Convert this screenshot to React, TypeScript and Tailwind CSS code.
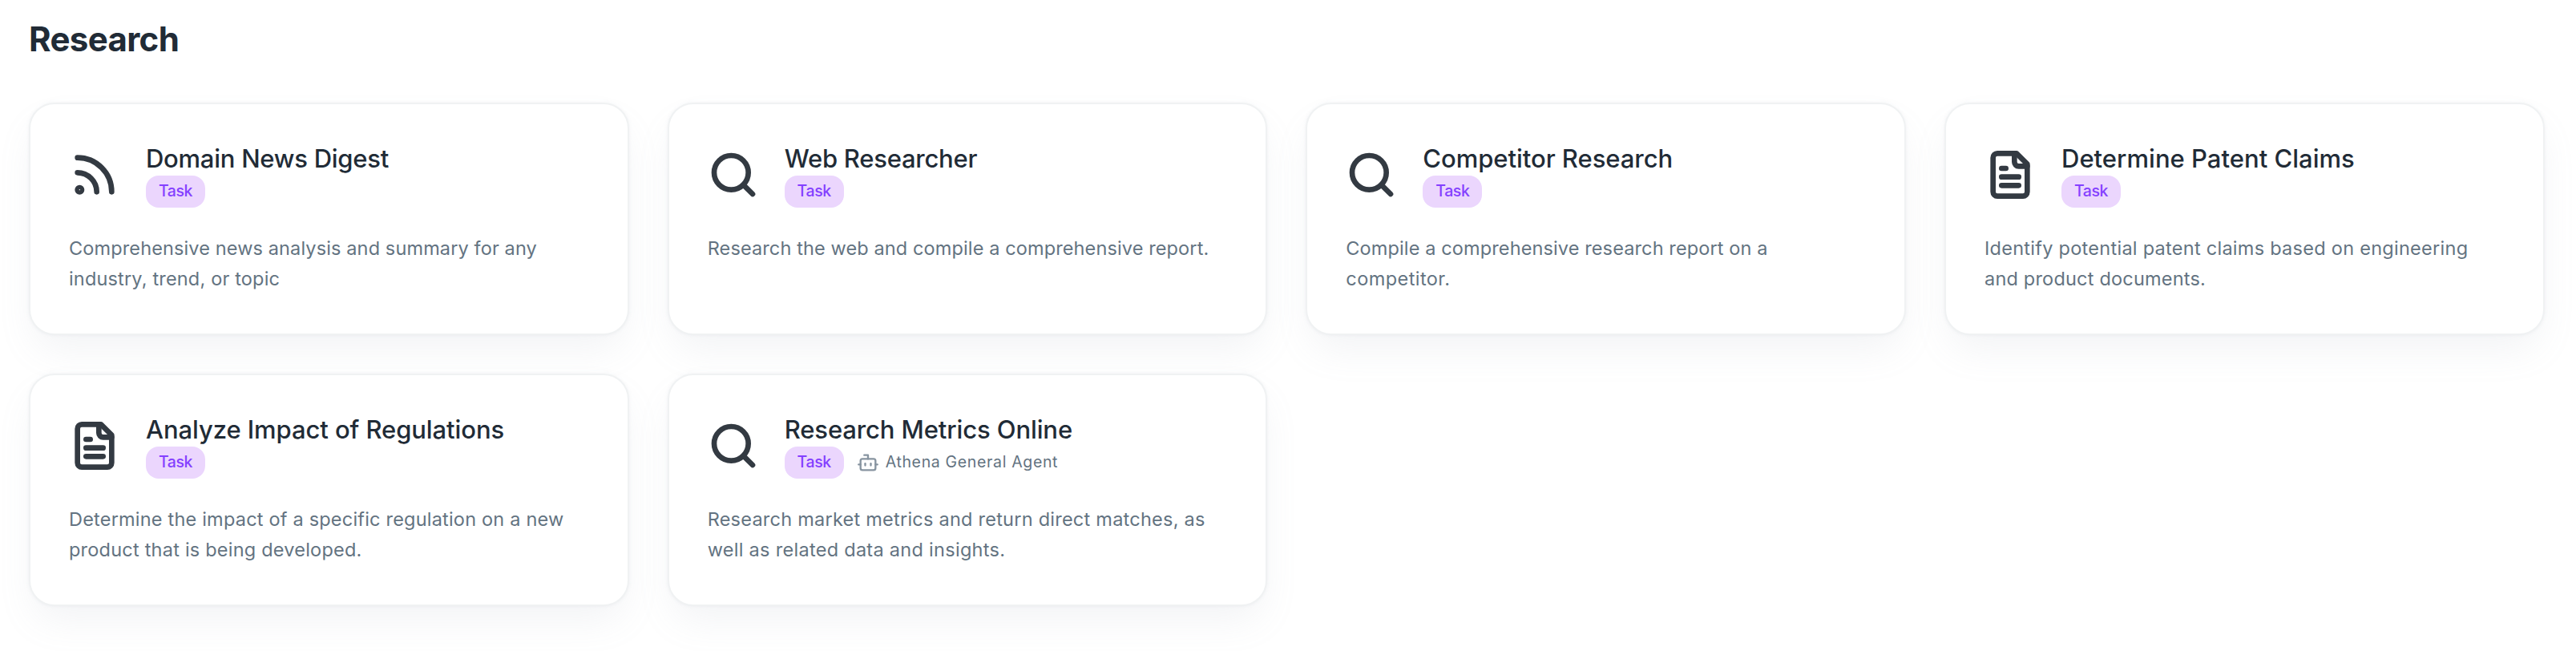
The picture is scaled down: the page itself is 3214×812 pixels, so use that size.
import type { ReactNode } from "react";

type Kind = "rss" | "search" | "file";

interface Line {
  text: string;
  tracking: string;
}

interface CardData {
  icon: Kind;
  title: Line;
  lines: Line[];
  agent?: string;
}

const cards: CardData[] = [
  {
    icon: "rss",
    title: { text: "Domain News Digest", tracking: "tracking-[-0.26px]" },
    lines: [
      { text: "Comprehensive news analysis and summary for any", tracking: "tracking-[0.124px]" },
      { text: "industry, trend, or topic", tracking: "tracking-[0.171px]" },
    ],
  },
  {
    icon: "search",
    title: { text: "Web Researcher", tracking: "tracking-[-0.25px]" },
    lines: [{ text: "Research the web and compile a comprehensive report.", tracking: "tracking-[0.12px]" }],
  },
  {
    icon: "search",
    title: { text: "Competitor Research", tracking: "tracking-[-0.04px]" },
    lines: [
      { text: "Compile a comprehensive research report on a", tracking: "tracking-[0.12px]" },
      { text: "competitor.", tracking: "tracking-[0.43px]" },
    ],
  },
  {
    icon: "file",
    title: { text: "Determine Patent Claims", tracking: "tracking-[0.02px]" },
    lines: [
      { text: "Identify potential patent claims based on engineering", tracking: "tracking-[0.27px]" },
      { text: "and product documents.", tracking: "tracking-[0.2px]" },
    ],
  },
  {
    icon: "file",
    title: { text: "Analyze Impact of Regulations", tracking: "tracking-[-0.08px]" },
    lines: [
      { text: "Determine the impact of a specific regulation on a new", tracking: "tracking-[0.202px]" },
      { text: "product that is being developed.", tracking: "tracking-[0.22px]" },
    ],
  },
  {
    icon: "search",
    title: { text: "Research Metrics Online", tracking: "tracking-[-0.11px]" },
    lines: [
      { text: "Research market metrics and return direct matches, as", tracking: "tracking-[0.24px]" },
      { text: "well as related data and insights.", tracking: "tracking-[0.29px]" },
    ],
    agent: "Athena General Agent",
  },
];

const shapes: Record<Kind, ReactNode> = {
  rss: (
    <>
      <path d="M4 11a9 9 0 0 1 9 9" />
      <path d="M4 4a16 16 0 0 1 16 16" />
      <circle cx="5" cy="19" r="1" />
    </>
  ),
  search: (
    <>
      <circle cx="11" cy="11" r="8" />
      <path d="m21 21-4.3-4.3" />
    </>
  ),
  file: (
    <>
      <path d="M15 2H6a2 2 0 0 0-2 2v16a2 2 0 0 0 2 2h12a2 2 0 0 0 2-2V7Z" />
      <path d="M14 2v4a2 2 0 0 0 2 2h4" />
      <path d="M10 9H8" />
      <path d="M16 13H8" />
      <path d="M16 17H8" />
    </>
  ),
};

function BotIcon() {
  return (
    <svg viewBox="0 0 24 24" className="h-7 w-7 shrink-0 fill-none stroke-[#8794a0] stroke-2" strokeLinecap="round" strokeLinejoin="round">
      <path d="M12 8V4H8" />
      <rect width="16" height="12" x="4" y="8" rx="2" />
      <path d="M2 14h2" />
      <path d="M20 14h2" />
      <path d="M15 13v2" />
      <path d="M9 13v2" />
    </svg>
  );
}

function Card({ card }: { card: CardData }) {
  return (
    <article className="h-[290px] rounded-[32px] border-2 border-[#f0f2f3] bg-white px-12 pt-12 shadow-[0_0_4px_rgba(145,158,171,0.12),0_24px_48px_-8px_rgba(145,158,171,0.12)]">
      <div className="flex h-20 items-center">
        <svg viewBox="0 0 24 24" className="h-16 w-16 shrink-0 fill-none stroke-[#333a42] stroke-[2.5]" strokeLinecap="round" strokeLinejoin="round">
          {shapes[card.icon]}
        </svg>
        <div className="ml-8 h-20">
          <h2 className={`h-[41px] text-[31px] leading-10 font-[450] whitespace-nowrap text-[#212b36] ${card.title.tracking}`}>
            {card.title.text}
          </h2>
          <div className="flex h-10 items-center gap-4">
            <span className="flex h-10 w-[74px] items-center justify-center rounded-2xl bg-[#ebd6fd] text-[19.5px] font-[450] tracking-[-0.4px] text-[#8440ff]">
              Task
            </span>
            {card.agent && (
              <span className="flex items-center gap-2 text-[19.5px] tracking-[0.66px] whitespace-nowrap text-[#637381]">
                <BotIcon />
                {card.agent}
              </span>
            )}
          </div>
        </div>
      </div>
      <p className="mt-[33px] text-[23.5px] leading-[38px] text-[#637381]">
        {card.lines.map((line) => (
          <span key={line.text} className={`block whitespace-nowrap ${line.tracking}`}>
            {line.text}
          </span>
        ))}
      </p>
    </article>
  );
}

export default function App() {
  return (
    <main className="h-[812px] w-[3214px] overflow-hidden bg-white pt-[19px] pl-9 font-['Inter',sans-serif]">
      <h1 className="h-[61px] text-[42px] leading-[60px] font-bold tracking-[-0.65px] text-[#212b36]">Research</h1>
      <section className="mt-12 grid w-[3138.67px] grid-cols-4 gap-12">
        {cards.map((card) => (
          <Card key={card.title.text} card={card} />
        ))}
      </section>
    </main>
  );
}
